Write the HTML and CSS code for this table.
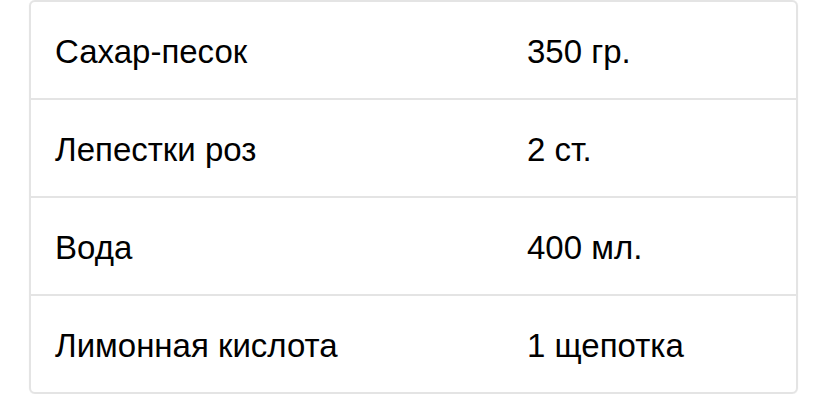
FILE: index.html
```html
<!DOCTYPE html>
<html lang="ru">
<head>
<meta charset="utf-8">
<link rel="stylesheet" href="styles.css">
</head>
<body>
<div class="table">
  <div class="row"><div class="cell name">Сахар-песок</div><div class="cell qty">350 гр.</div></div>
  <div class="row"><div class="cell name">Лепестки роз</div><div class="cell qty">2 ст.</div></div>
  <div class="row"><div class="cell name">Вода</div><div class="cell qty">400 мл.</div></div>
  <div class="row"><div class="cell name">Лимонная кислота</div><div class="cell qty">1 щепотка</div></div>
</div>
</body>
</html>
```
FILE: styles.css
```css
html, body {
  margin: 0;
  padding: 0;
  background: #fff;
}
body {
  font-family: "Liberation Sans", Arial, sans-serif;
  color: #000;
}
.table {
  margin-left: 29px;
  width: 769px;
  box-sizing: border-box;
  border: 2px solid #e4e4e4;
  border-radius: 6px;
  box-shadow: 0 0 1px rgba(0,0,0,0.1);
  display: flex;
  flex-direction: column;
}
.row {
  display: grid;
  grid-template-columns: 472px 1fr;
  height: 96px;
  align-items: center;
}
.row + .row {
  border-top: 2px solid #e4e4e4;
}
.cell {
  padding: 4px 24px 0 24px;
  font-size: 33px;
  line-height: 36px;
  white-space: nowrap;
}
```
